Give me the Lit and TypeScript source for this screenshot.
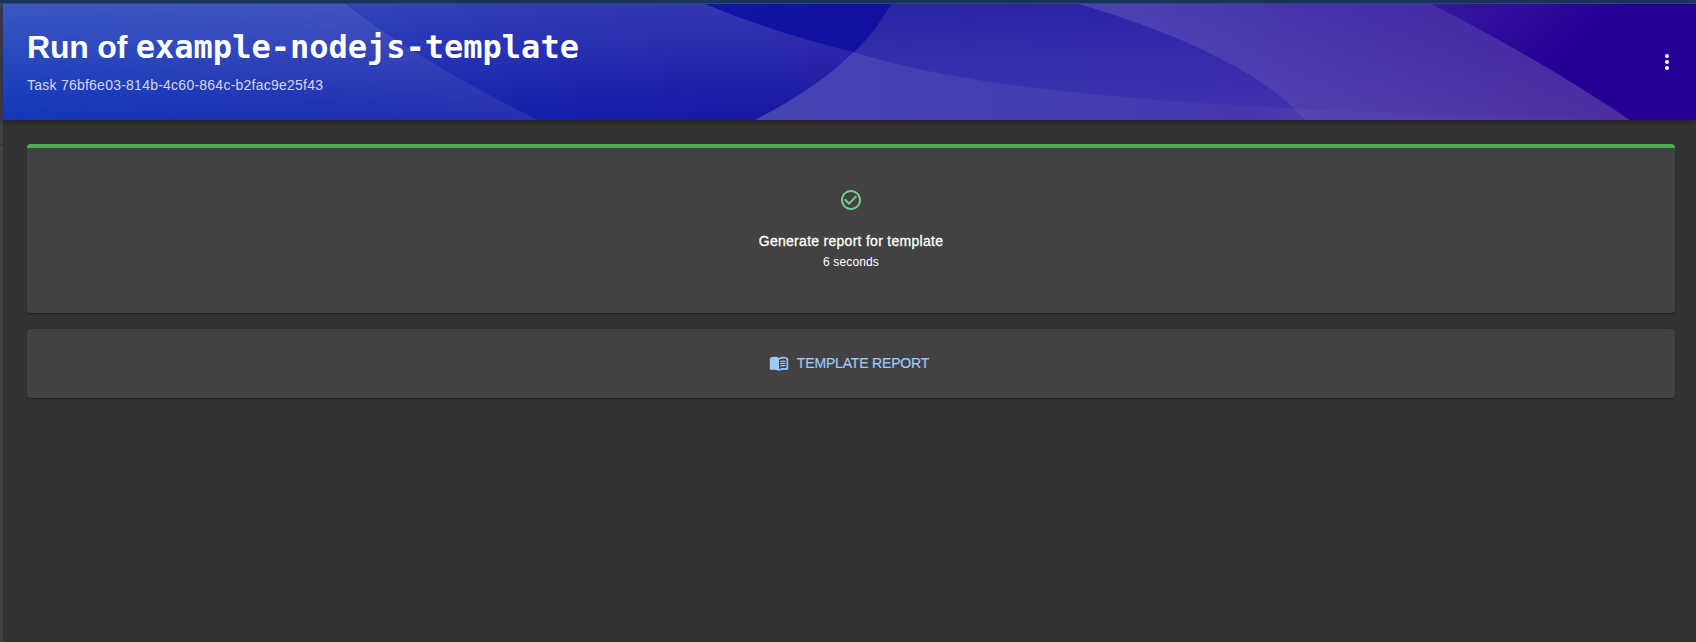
import { LitElement, html, css, svg } from "lit";
import { customElement } from "lit/decorators.js";

interface Stop { at: number; color: string; opacity?: number }
interface Region { id: string; d: string; x: [number, number]; stops: Stop[]; fade: Stop[] }

// Banner artwork, in a 1693 x 116 space. Each region has a horizontal tint and a vertical haze.
const regions: Region[] = [
  {
    id: "base", d: "M0 0H1693V116H0Z", x: [702, 888],
    stops: [{ at: 0, color: "#1014a6" }, { at: 1, color: "#1410a0" }],
    fade: [],
  },
  {
    id: "mid", d: "M343 0H702Q772 29 850 48Q815 84 752 116H535Q418 58 343 0Z", x: [343, 850],
    stops: [{ at: 0, color: "#1428b2" }, { at: 0.5, color: "#141ca8" }, { at: 1, color: "#1a14a2" }],
    fade: [{ at: 0, color: "#fff", opacity: 0.13 }, { at: 1, color: "#fff", opacity: 0 }],
  },
  {
    id: "left", d: "M0 0H343Q418 58 535 116H0Z", x: [0, 535],
    stops: [{ at: 0, color: "#1236b8" }, { at: 0.6, color: "#1c30b2" }, { at: 1, color: "#262eae" }],
    fade: [{ at: 0, color: "#fff", opacity: 0.17 }, { at: 1, color: "#fff", opacity: 0 }],
  },
  {
    id: "center", d: "M888 0H1076C1190 34 1265 74 1302 116H752C822 80 864 44 888 0Z", x: [850, 1250],
    stops: [{ at: 0, color: "#2826a6" }, { at: 1, color: "#3020a8" }],
    fade: [{ at: 0, color: "#fff", opacity: 0 }, { at: 1, color: "#fff", opacity: 0.09 }],
  },
  {
    id: "swell", d: "M850 48C990 92 1220 106 1627 116H752Q815 84 850 48Z", x: [800, 1302],
    stops: [{ at: 0, color: "#4343b4" }, { at: 0.6, color: "#453bb2" }, { at: 1, color: "#4535ad" }],
    fade: [],
  },
  {
    id: "right", d: "M1076 0H1429Q1545 60 1627 116H1302C1265 74 1190 34 1076 0Z", x: [1076, 1600],
    stops: [{ at: 0, color: "#4c42b2" }, { at: 0.4, color: "#4634ac" }, { at: 1, color: "#42229e" }],
    fade: [{ at: 0, color: "#fff", opacity: 0 }, { at: 1, color: "#fff", opacity: 0.06 }],
  },
  {
    id: "corner", d: "M1429 0H1693V116H1627Q1545 60 1429 0Z", x: [1429, 1600],
    stops: [{ at: 0, color: "#260296" }, { at: 1, color: "#260096" }],
    fade: [],
  },
];

const stopsOf = (stops: Stop[]) =>
  stops.map((s) => svg`<stop offset=${s.at} stop-color=${s.color} stop-opacity=${s.opacity ?? 1}></stop>`);

@customElement("banner-art")
export class BannerArt extends LitElement {
  static styles = css`
    :host { display: block; min-width: 0; }
    svg { display: block; width: 100%; height: 116px; }
  `;
  render() {
    return html`<svg viewBox="0 0 1693 116" preserveAspectRatio="none" aria-hidden="true">
      <defs>
        ${regions.map((r) => svg`
          <linearGradient id=${r.id} gradientUnits="userSpaceOnUse" x1=${r.x[0]} x2=${r.x[1]} y1="0" y2="0">${stopsOf(r.stops)}</linearGradient>
          <linearGradient id=${r.id + "-fade"} gradientUnits="userSpaceOnUse" x1="0" x2="0" y1="0" y2="116">${stopsOf(r.fade)}</linearGradient>`)}
        <linearGradient id="trail" gradientUnits="userSpaceOnUse" x1="1250" x2="1627" y1="0" y2="0">
          <stop offset="0" stop-color="#fff" stop-opacity="0"></stop>
          <stop offset="0.12" stop-color="#fff" stop-opacity="0.03"></stop>
          <stop offset="1" stop-color="#fff" stop-opacity="0.01"></stop>
        </linearGradient>
        <linearGradient id="glow" gradientUnits="userSpaceOnUse" x1="1435" x2="1520" y1="0" y2="95">
          <stop offset="0" stop-color="#fff" stop-opacity="0.08"></stop>
          <stop offset="1" stop-color="#fff" stop-opacity="0"></stop>
        </linearGradient>
      </defs>
      ${regions.map((r) => svg`
        <path d=${r.d} fill="url(#${r.id})"></path>
        ${r.fade.length ? svg`<path d=${r.d} fill="url(#${r.id}-fade)"></path>` : null}`)}
      <path d="M850 48C990 92 1220 106 1627 116H752Q815 84 850 48Z" fill="url(#trail)"></path>
      <path d="M1429 0H1693V116H1627Q1545 60 1429 0Z" fill="url(#glow)"></path>
    </svg>`;
  }
}

@customElement("app-root")
export class AppRoot extends LitElement {
  static styles = css`
    :host {
      display: grid;
      grid-template-columns: 3px minmax(0, 1fr);
      grid-template-rows: 3px 1fr;
      height: 642px;
      background: #333;
      color: #fff;
      font-family: "Liberation Sans", Arial, sans-serif;
    }
    .topbar { grid-column: 1 / -1; background: #1b375f; }
    .rail { background: #424242; }
    .rail::after { content: ""; display: block; height: 1px; margin-top: 141px; background: #333; }
    .page { display: flex; flex-direction: column; border-top: 1px solid #34557a; }
    .banner {
      display: grid;
      grid-template-columns: minmax(0, 1fr);
      height: 116px;
      box-shadow: 0 2px 8px 0 rgba(0, 0, 0, 0.4);
    }
    .banner > * { grid-area: 1 / 1; }
    .heading { display: flex; align-items: center; justify-content: space-between; padding: 0 17px 0 24px; }
    h1 { margin: 0 0 9px; font-size: 32px; line-height: 37px; font-weight: 700; white-space: pre; letter-spacing: -0.2px; }
    code { font-family: "DejaVu Sans Mono", monospace; letter-spacing: 0; }
    .task { margin: 0; font-size: 14px; line-height: 20px; letter-spacing: 0.24px; color: rgba(255, 255, 255, 0.8); }
    .menu { display: block; width: 24px; height: 24px; fill: #fff; }
    .content { display: flex; flex-direction: column; gap: 16px; padding: 24px 21px 0 24px; }
    .card {
      display: flex;
      align-items: center;
      background: #424242;
      border-radius: 4px;
      box-shadow: 0 2px 1px -1px rgba(0, 0, 0, 0.2), 0 1px 1px rgba(0, 0, 0, 0.14), 0 1px 3px rgba(0, 0, 0, 0.12);
    }
    .steps { flex-direction: column; height: 169px; overflow: hidden; }
    .progress { width: 100%; height: 4px; background: #4caf50; }
    .done { width: 24px; height: 24px; margin-top: 40px; fill: #71cf88; }
    .name { margin-top: 19px; font-size: 14px; line-height: 20px; letter-spacing: 0.28px; -webkit-text-stroke: 0.3px #fff; }
    .time { margin-top: 2px; font-size: 12px; line-height: 18px; letter-spacing: 0.15px; }
    .links { justify-content: center; height: 69px; padding: 0 4px 2px 0; box-sizing: border-box; }
    .link { display: flex; align-items: center; gap: 8px; color: #9cc9ff; font-size: 14px; letter-spacing: -0.17px; text-transform: uppercase; -webkit-text-stroke: 0.2px #9cc9ff; }
    .link svg { width: 20px; height: 20px; fill: currentColor; stroke: none; }
  `;

  render() {
    return html`
      <div class="topbar"></div>
      <div class="rail"></div>
      <main class="page">
        <header class="banner">
          <banner-art></banner-art>
          <div class="heading">
            <div>
              <h1>Run of <code>example-nodejs-template</code></h1>
              <p class="task">Task 76bf6e03-814b-4c60-864c-b2fac9e25f43</p>
            </div>
            <svg class="menu" viewBox="0 0 24 24"><path d="M12 8c1.1 0 2-.9 2-2s-.9-2-2-2-2 .9-2 2 .9 2 2 2zm0 2c-1.1 0-2 .9-2 2s.9 2 2 2 2-.9 2-2-.9-2-2-2zm0 6c-1.1 0-2 .9-2 2s.9 2 2 2 2-.9 2-2-.9-2-2-2z"></path></svg>
          </div>
        </header>
        <section class="content">
          <div class="card steps">
            <div class="progress"></div>
            <svg class="done" viewBox="0 0 24 24"><path d="M16.59 7.58 10 14.17l-3.59-3.58L5 12l5 5 8-8zM12 2C6.48 2 2 6.48 2 12s4.48 10 10 10 10-4.48 10-10S17.52 2 12 2zm0 18c-4.42 0-8-3.58-8-8s3.58-8 8-8 8 3.58 8 8-3.58 8-8 8z"></path></svg>
            <div class="name">Generate report for template</div>
            <div class="time">6 seconds</div>
          </div>
          <div class="card links">
            <div class="link">
              <svg viewBox="0 0 24 24"><path d="M17.5 4.5c-1.95 0-4.05.4-5.5 1.5-1.45-1.1-3.55-1.5-5.5-1.5-1.45 0-2.99.22-4.28.79C1.49 5.62 1 6.33 1 7.14v11.28c0 1.3 1.22 2.26 2.48 1.94.98-.25 2.02-.36 3.02-.36 1.56 0 3.22.26 4.56.92.6.3 1.28.3 1.87 0 1.34-.67 3-.92 4.56-.92 1 0 2.04.11 3.02.36 1.26.33 2.48-.63 2.48-1.94V7.14c0-.81-.49-1.52-1.22-1.85-1.28-.57-2.82-.79-4.27-.79zM21 17.23c0 .63-.58 1.09-1.2.98-.75-.14-1.53-.2-2.3-.2-1.7 0-4.15.65-5.5 1.5V8c1.35-.85 3.8-1.5 5.5-1.5.92 0 1.83.09 2.7.28.46.1.8.51.8.98v9.47z"></path><path d="M13.98 11.01c-.32 0-.61-.2-.71-.52-.13-.39.09-.82.48-.94 1.54-.5 3.53-.66 5.36-.45.41.05.71.42.66.83s-.42.71-.83.66c-1.62-.19-3.39-.04-4.73.39-.08.01-.16.03-.23.03zm0 2.66c-.32 0-.61-.2-.71-.52-.13-.39.09-.82.48-.94 1.53-.5 3.53-.66 5.36-.45.41.05.71.42.66.83s-.42.71-.83.66c-1.62-.19-3.39-.04-4.73.39-.08.02-.16.03-.23.03zm0 2.66c-.32 0-.61-.2-.71-.52-.13-.39.09-.82.48-.94 1.53-.5 3.53-.66 5.36-.45.41.05.71.42.66.83s-.42.7-.83.66c-1.62-.19-3.39-.04-4.73.39-.08.02-.16.03-.23.03z"></path></svg>
              <span>Template report</span>
            </div>
          </div>
        </section>
      </main>
    `;
  }
}
